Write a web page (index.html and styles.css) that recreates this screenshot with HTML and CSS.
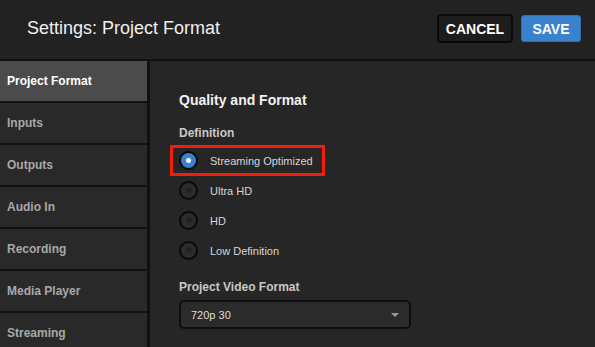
FILE: index.html
```html
<!DOCTYPE html>
<html lang="en">
<head>
    <meta charset="UTF-8">
    <meta name="viewport" content="width=device-width, initial-scale=1.0">
    <title>Settings: Project Format</title>
    <link rel="stylesheet" href="styles.css">
</head>
<body>
    <div class="header">
        <h1 class="title">Settings: Project Format</h1>
        <div class="actions">
            <button class="btn cancel">CANCEL</button>
            <button class="btn save">SAVE</button>
        </div>
    </div>
    <div class="main">
        <div class="sidebar">
            <div class="nav-item active">Project Format</div>
            <div class="nav-item">Inputs</div>
            <div class="nav-item">Outputs</div>
            <div class="nav-item">Audio In</div>
            <div class="nav-item">Recording</div>
            <div class="nav-item">Media Player</div>
            <div class="nav-item">Streaming</div>
        </div>
        <div class="content">
            <h2 class="section-title">Quality and Format</h2>
            <div class="label">Definition</div>
            <div class="radios">
                <div class="radio-row highlight">
                    <span class="radio checked"></span>
                    <span class="radio-label">Streaming Optimized</span>
                </div>
                <div class="radio-row">
                    <span class="radio"></span>
                    <span class="radio-label">Ultra HD</span>
                </div>
                <div class="radio-row">
                    <span class="radio"></span>
                    <span class="radio-label">HD</span>
                </div>
                <div class="radio-row">
                    <span class="radio"></span>
                    <span class="radio-label">Low Definition</span>
                </div>
            </div>
            <div class="label format-label">Project Video Format</div>
            <div class="select">
                <span>720p 30</span>
                <span class="caret"></span>
            </div>
        </div>
    </div>
</body>
</html>
```

FILE: styles.css
```css
body{
    margin: 0;
    font-family: "Liberation Sans", Arial, Helvetica, sans-serif;
    background: #262626;
    color: #ddd;
    width: 595px;
    height: 347px;
    overflow: hidden;
}

.header{
    height: 59px;
    background: #222;
    border-bottom: 2px solid #111;
    display: flex;
    align-items: center;
    justify-content: space-between;
    padding: 0 14px 0 27px;
}

.title{
    margin: 0;
    font-size: 18px;
    font-weight: normal;
    color: #f0f0f0;
    padding-bottom: 2px;
}

.actions{
    display: flex;
    gap: 8px;
    align-items: center;
    padding-bottom: 2px;
}

.btn{
    font-family: "Liberation Sans", Arial, sans-serif;
    font-size: 14px;
    font-weight: bold;
    color: #fff;
    border-radius: 4px;
    cursor: pointer;
}

.cancel{
    width: 76px;
    height: 29px;
    background: #1d1d1d;
    border: 2px solid #0a0a0a;
}

.save{
    width: 60px;
    height: 27px;
    background: #3b82cc;
    border: 1px solid #2e6fb3;
    border-radius: 3px;
}

.main{
    display: flex;
    height: 286px;
}

.sidebar{
    width: 147px;
    border-right: 3px solid #111;
    background: #111;
}

.nav-item{
    height: 40px;
    line-height: 41px;
    margin-bottom: 2px;
    padding-left: 7px;
    font-size: 12px;
    font-weight: bold;
    color: #a8a8a8;
    background: #292929;
}

.nav-item.active{
    background: #4b4b4b;
    color: #fff;
}

.content{
    flex: 1;
    padding: 31px 0 0 29px;
    background: #262626;
}

.section-title{
    margin: 0;
    font-size: 14px;
    line-height: 17px;
    color: #f2f2f2;
}

.label{
    margin-top: 17px;
    font-size: 12px;
    line-height: 15px;
    font-weight: bold;
    color: #c8c8c8;
}

.radios{
    margin-top: 4px;
}

.radio-row{
    display: flex;
    align-items: center;
    height: 30px;
    margin-left: -9px;
    padding-left: 9px;
    box-sizing: border-box;
}

.radio-row.highlight{
    width: 155px;
    height: 31px;
    margin-bottom: -1px;
    border: 3px solid #f21d0a;
    padding-left: 6px;
}

.radio{
    width: 15px;
    height: 15px;
    border-radius: 50%;
    border: 2px solid #0a0a0a;
    background: #2c2c2c;
    display: flex;
    align-items: center;
    justify-content: center;
}

.radio::after{
    content: "";
    width: 6px;
    height: 6px;
    border-radius: 50%;
    background: #222;
}

.radio.checked{
    background: #3b82cc;
}

.radio.checked::after{
    width: 5px;
    height: 5px;
    background: #fff;
}

.radio-label{
    margin-left: 12px;
    margin-top: 1px;
    font-size: 11px;
    color: #d6d6d6;
}

.format-label{
    margin-top: 15px;
}

.select{
    margin-top: 5px;
    height: 25px;
    border: 2px solid #0e0e0e;
    border-radius: 5px;
    background: #2b2b2b;
    display: flex;
    align-items: center;
    justify-content: space-between;
    padding: 0 10px 0 10px;
    font-size: 11px;
    color: #ddd;
    box-sizing: content-box;
    width: 208px;
}

.caret{
    width: 0;
    height: 0;
    border-left: 4px solid transparent;
    border-right: 4px solid transparent;
    border-top: 4px solid #9a9a9a;
}
```
